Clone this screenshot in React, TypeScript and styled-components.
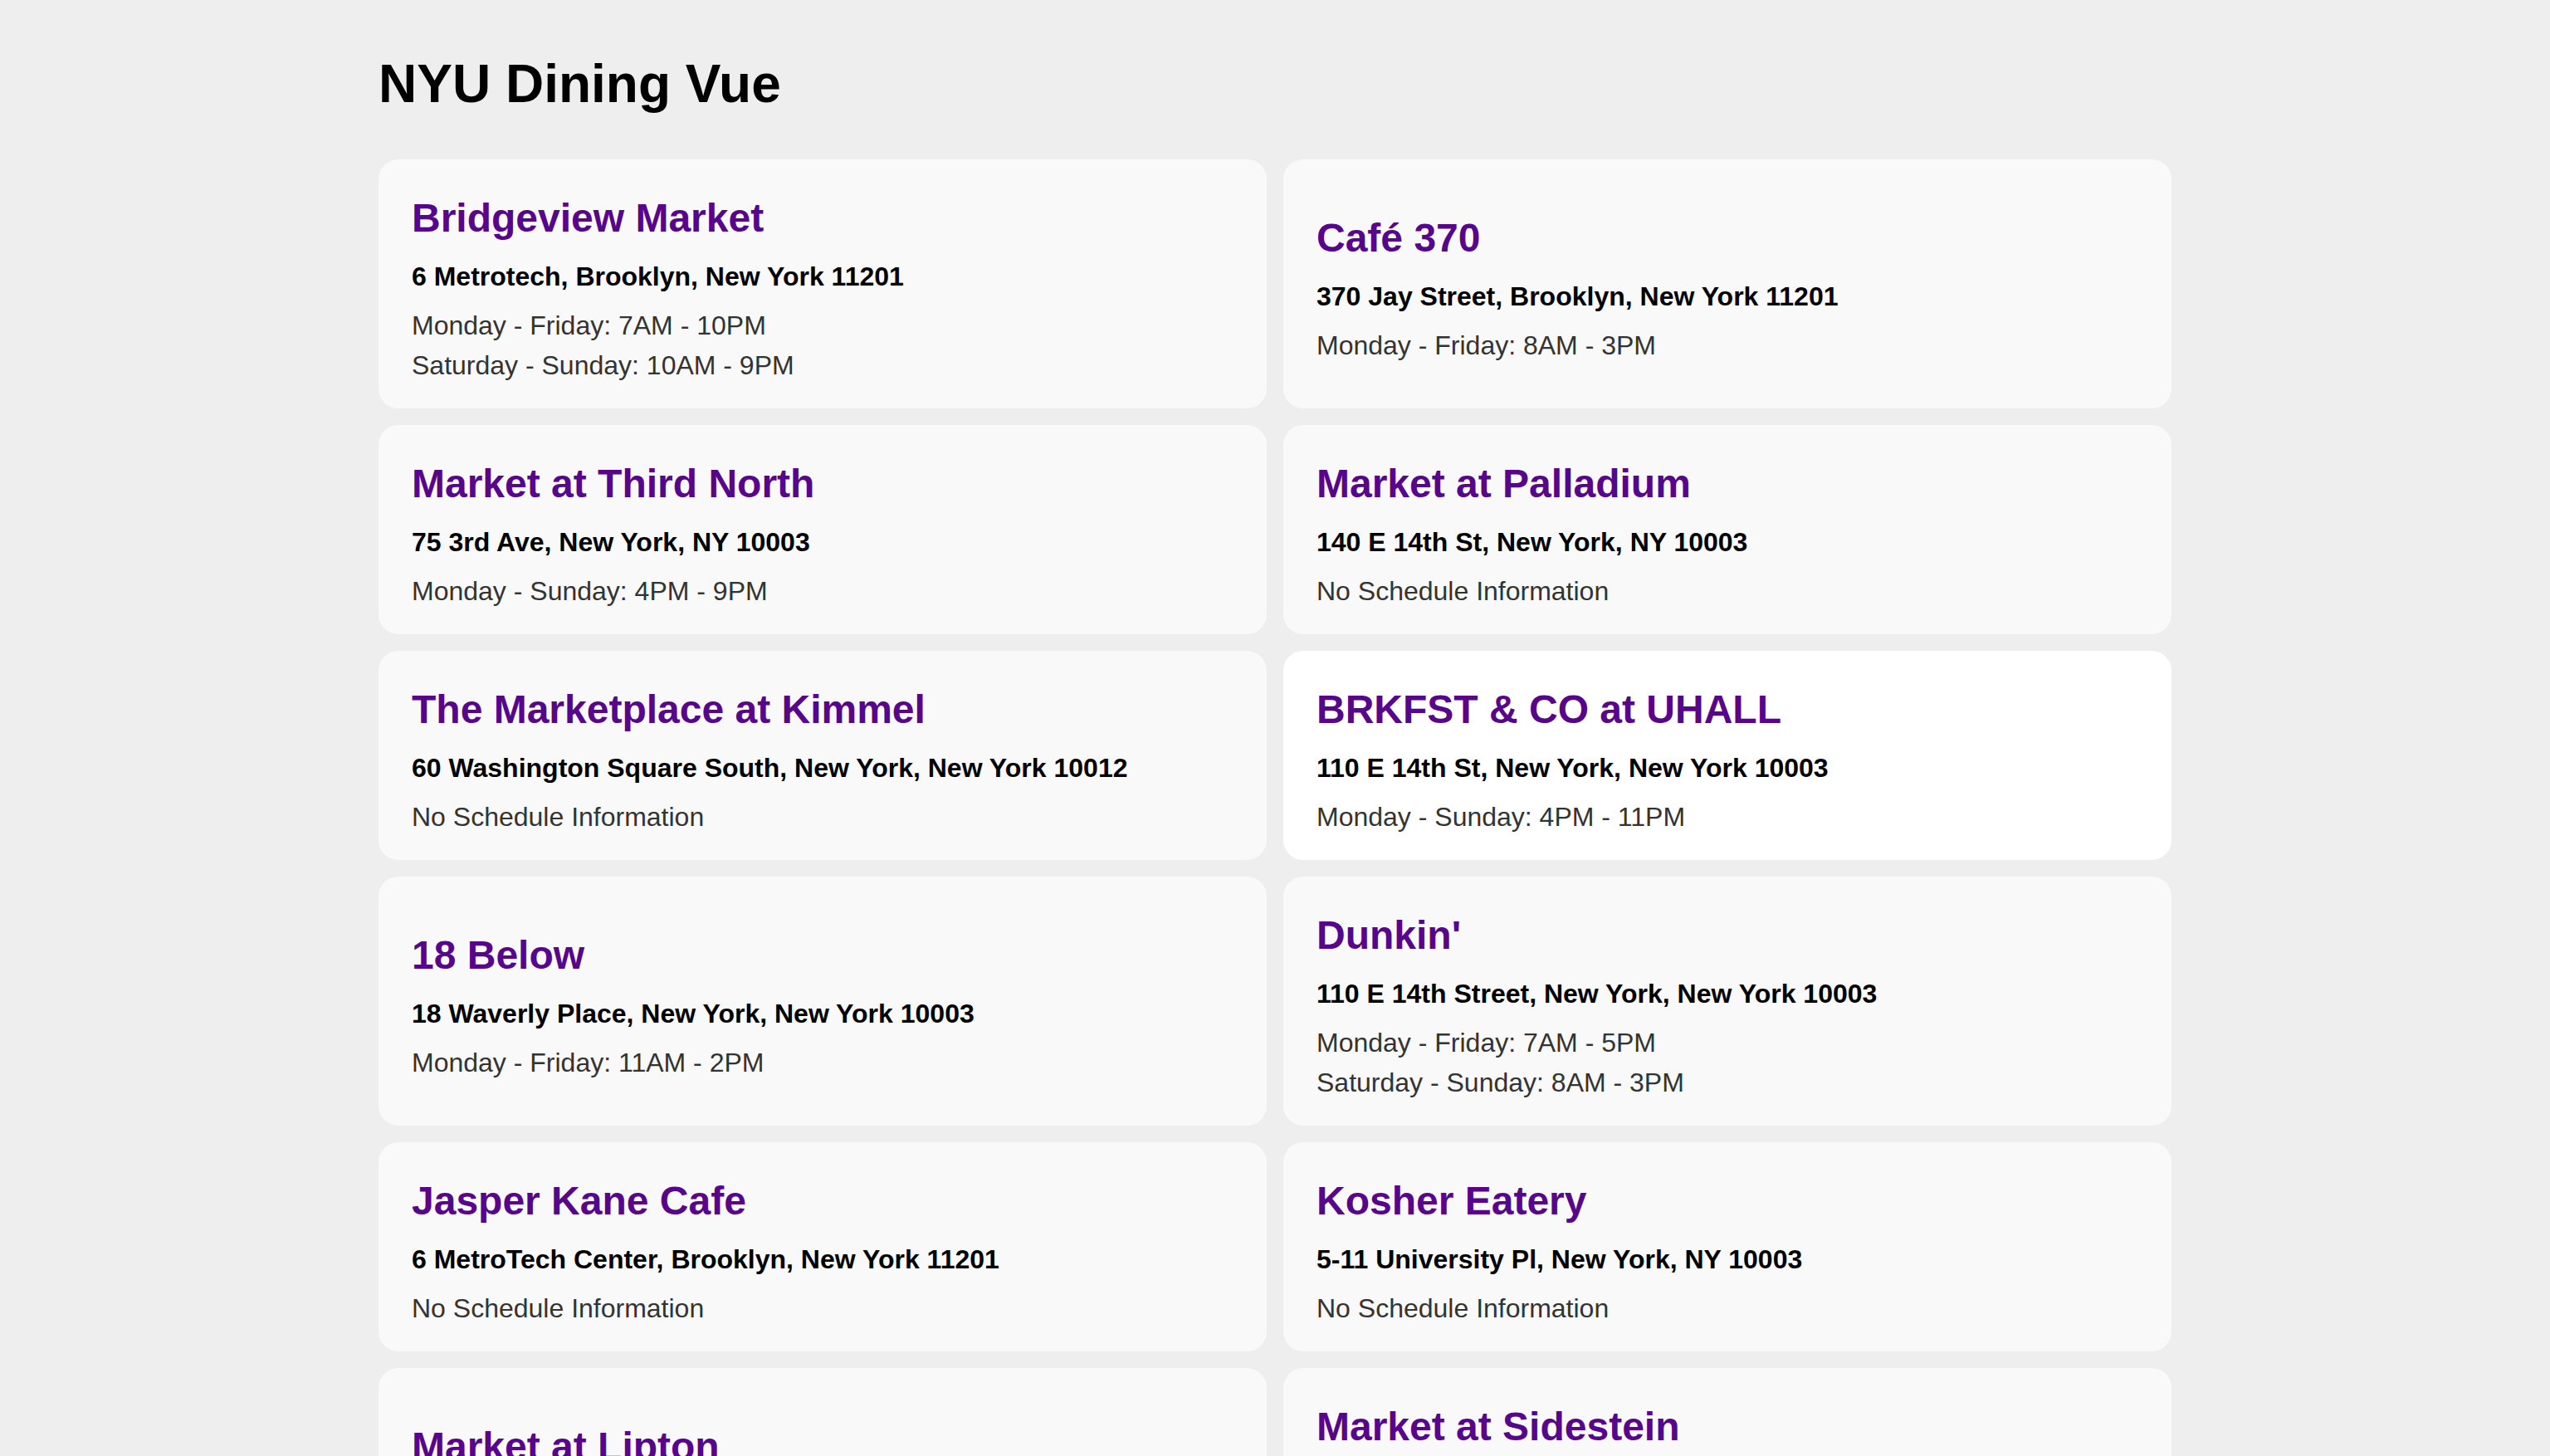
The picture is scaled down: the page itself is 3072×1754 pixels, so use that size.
import React from 'react';
import styled, { createGlobalStyle } from 'styled-components';

// Reset du navigateur + fond gris de la page
const GlobalStyle = createGlobalStyle`
  html, body {
    margin: 0;
    padding: 0;
    background: #eeeeee;
  }
  body {
    font-family: "Liberation Sans", Arial, Helvetica, sans-serif;
    -webkit-font-smoothing: antialiased;
  }
`;

type Location = {
  name: string;
  address: string;
  hours: string[];
  active?: boolean;
};

const locations: Location[] = [
  {
    name: 'Bridgeview Market',
    address: '6 Metrotech, Brooklyn, New York 11201',
    hours: ['Monday - Friday: 7AM - 10PM', 'Saturday - Sunday: 10AM - 9PM'],
  },
  {
    name: 'Café 370',
    address: '370 Jay Street, Brooklyn, New York 11201',
    hours: ['Monday - Friday: 8AM - 3PM'],
  },
  {
    name: 'Market at Third North',
    address: '75 3rd Ave, New York, NY 10003',
    hours: ['Monday - Sunday: 4PM - 9PM'],
  },
  {
    name: 'Market at Palladium',
    address: '140 E 14th St, New York, NY 10003',
    hours: [],
  },
  {
    name: 'The Marketplace at Kimmel',
    address: '60 Washington Square South, New York, New York 10012',
    hours: [],
  },
  {
    name: 'BRKFST & CO at UHALL',
    address: '110 E 14th St, New York, New York 10003',
    hours: ['Monday - Sunday: 4PM - 11PM'],
    active: true,
  },
  {
    name: '18 Below',
    address: '18 Waverly Place, New York, New York 10003',
    hours: ['Monday - Friday: 11AM - 2PM'],
  },
  {
    name: "Dunkin'",
    address: '110 E 14th Street, New York, New York 10003',
    hours: ['Monday - Friday: 7AM - 5PM', 'Saturday - Sunday: 8AM - 3PM'],
  },
  {
    name: 'Jasper Kane Cafe',
    address: '6 MetroTech Center, Brooklyn, New York 11201',
    hours: [],
  },
  {
    name: 'Kosher Eatery',
    address: '5-11 University Pl, New York, NY 10003',
    hours: [],
  },
  {
    name: 'Market at Lipton',
    address: '33 Washington Square West, New York, NY 10011',
    hours: ['Monday - Sunday: 11AM - 10PM'],
  },
  {
    name: 'Market at Sidestein',
    address: '120 E 12th St, New York, NY 10003',
    hours: ['Monday - Friday: 8AM - 11PM', 'Saturday - Sunday: 10AM - 11PM'],
  },
];

// Conteneur centré de la page
const Page = styled.main`
  width: 2160px;
  margin: 0 auto;
  padding-bottom: 80px;
`;

const Title = styled.h1`
  margin: 0;
  padding-top: 64px;
  margin-bottom: 54px;
  font-size: 64px;
  line-height: 74px;
  font-weight: bold;
  color: #000;
`;

// Grille à deux colonnes
const Grid = styled.section`
  display: grid;
  grid-template-columns: 1fr 1fr;
  gap: 20px;
`;

const Card = styled.article<{ $active?: boolean }>`
  display: flex;
  flex-direction: column;
  justify-content: center;
  padding: 43px 40px 28px;
  border-radius: 24px;
  background: ${(p) => (p.$active ? '#ffffff' : '#f9f9f9')};
`;

const Name = styled.h2`
  margin: 0;
  font-size: 48px;
  line-height: 56px;
  font-weight: bold;
  color: #57068c;
`;

const Address = styled.p`
  margin: 22px 0 0;
  font-size: 32px;
  line-height: 40px;
  font-weight: bold;
  color: #000;
`;

const Hours = styled.div`
  margin-top: 15px;
`;

const HoursLine = styled.p`
  margin: 0;
  font-size: 32px;
  line-height: 48px;
  color: #333333;
`;

const LocationCard = ({ location }: { location: Location }) => (
  <Card $active={location.active}>
    <Name>{location.name}</Name>
    <Address>{location.address}</Address>
    <Hours>
      {location.hours.length === 0 ? (
        <HoursLine>No Schedule Information</HoursLine>
      ) : (
        location.hours.map((h) => <HoursLine key={h}>{h}</HoursLine>)
      )}
    </Hours>
  </Card>
);

export default function App() {
  return (
    <>
      <GlobalStyle />
      <Page>
        <Title>NYU Dining Vue</Title>
        <Grid>
          {locations.map((loc) => (
            <LocationCard key={loc.name} location={loc} />
          ))}
        </Grid>
      </Page>
    </>
  );
}
